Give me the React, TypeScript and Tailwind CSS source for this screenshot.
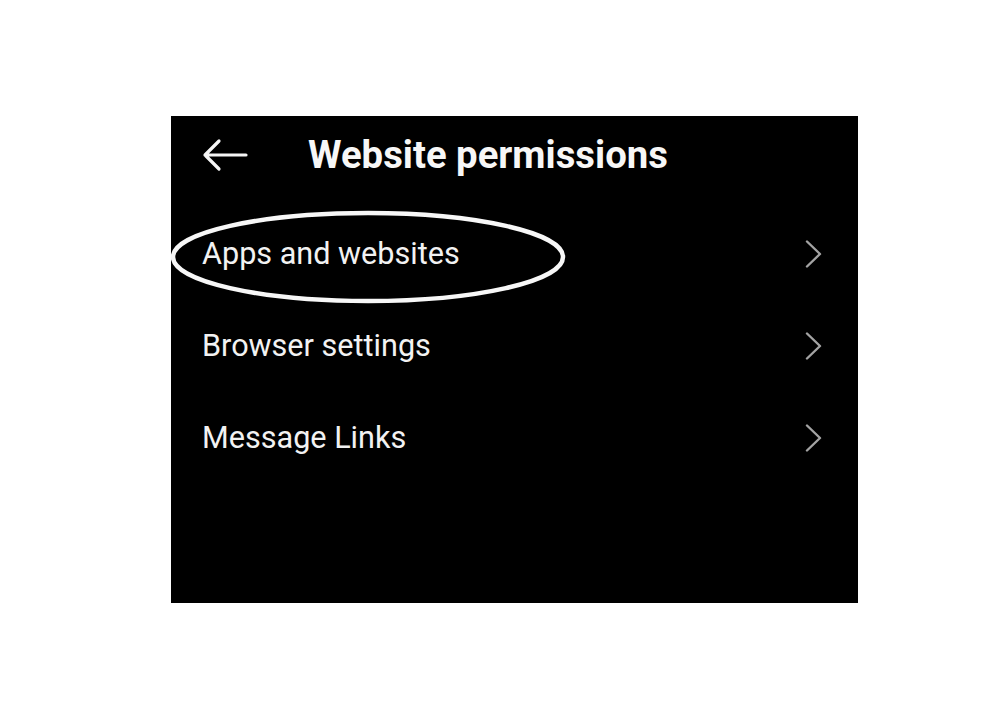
import React from "react";

const Chevron = () => (
  <svg width="18" height="28" viewBox="0 0 18 28" fill="none">
    <polyline points="2,1.5 15,14 2,26.5" stroke="#a3a3a3" strokeWidth="2.4" strokeLinecap="round" strokeLinejoin="round" />
  </svg>
);

const Row = ({ label }: { label: string }) => (
  <div className="flex h-[92px] items-center justify-between pl-[31px] pr-[35px]">
    <span className="text-[30.6px] leading-none text-[#f2f2f2]">{label}</span>
    <Chevron />
  </div>
);

export default function App() {
  return (
    <div className="min-h-[720px] w-[1000px] bg-white pl-[171px] pt-[116px]" style={{ fontFamily: "Roboto, 'Liberation Sans', sans-serif" }}>
      <div className="relative h-[487px] w-[687px] bg-black">
        <div className="flex h-[78px] items-center pl-[31px]">
          <svg width="46" height="34" viewBox="0 0 46 34" fill="none">
            <path d="M3 17 H44 M17 3 L3 17 L17 31" stroke="#f5f5f5" strokeWidth="3.2" strokeLinecap="round" strokeLinejoin="round" />
          </svg>
          <span className="ml-[60px] text-[38.3px] font-bold leading-none text-[#f7f7f7]">Website permissions</span>
        </div>
        <div className="mt-[14px]">
          <Row label="Apps and websites" />
          <Row label="Browser settings" />
          <Row label="Message Links" />
        </div>
        <svg className="absolute left-0 top-[92px]" width="400" height="100" viewBox="0 0 400 100" fill="none">
          <ellipse cx="197" cy="49" rx="195" ry="44" stroke="#f7f7f7" strokeWidth="4.5" />
        </svg>
      </div>
    </div>
  );
}
